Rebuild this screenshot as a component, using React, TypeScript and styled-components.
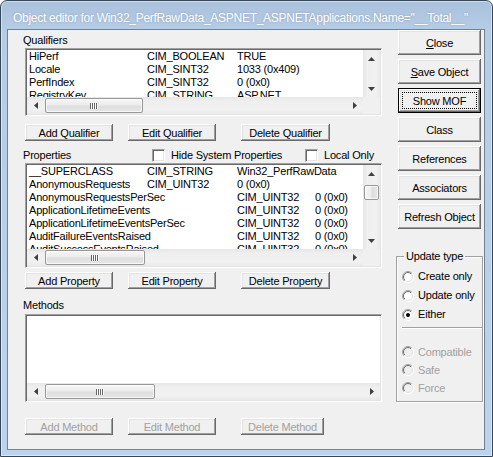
import React from "react";
import styled, { createGlobalStyle } from "styled-components";

const GlobalStyle = createGlobalStyle`
  html, body { margin: 0; padding: 0; background: #ffffff; }
  #root { width: 493px; height: 457px; }
  * { box-sizing: border-box; }
`;

const Window = styled.div`
  width: 493px;
  height: 457px;
  border: 1px solid #37475a;
  border-radius: 7px 7px 0 0;
  background: linear-gradient(to bottom, #a9c1dc 0px, #b6cce5 28px, #bcd3ed 100%);
  box-shadow: inset 0 0 0 1px rgba(255, 255, 255, 0.45);
  display: flex;
  flex-direction: column;
  overflow: hidden;
`;

const TitleBar = styled.div`
  height: 28px;
  flex: none;
  display: flex;
  align-items: center;
  padding: 5px 0 0 12px;
  font-family: "Liberation Sans", Arial, sans-serif;
  font-size: 12px;
  letter-spacing: -0.28px;
  color: #ffffff;
  white-space: nowrap;
  text-shadow: 0 0 2px rgba(60, 80, 110, 0.35);
`;

const Client = styled.div`
  flex: 1;
  margin: 0 7px 6px 6px;
  border: 1px solid #6e8299;
  background: #f0f0f0;
  display: flex;
  font-family: "Liberation Sans", Arial, sans-serif;
  font-size: 11px;
  letter-spacing: -0.2px;
  color: #000000;
`;

const LeftPane = styled.div`
  width: 374px;
  flex: none;
  padding-left: 15px;
  display: flex;
  flex-direction: column;
`;

const SectionLabel = styled.div<{ $top: number }>`
  margin-top: ${(p) => p.$top}px;
  height: 13px;
  line-height: 13px;
`;

const ListBox = styled.div<{ $h: number; $top: number; $vscroll: boolean }>`
  margin: ${(p) => p.$top}px 0 0 2px;
  width: 357px;
  height: ${(p) => p.$h}px;
  flex: none;
  background: #ffffff;
  border: 1px solid;
  border-color: #a0a0a0 #ffffff #ffffff #a0a0a0;
  padding: 1px;
  box-shadow: inset 1px 1px #696969, inset -1px -1px #e3e3e3;
  display: grid;
  grid-template-columns: ${(p) => (p.$vscroll ? "1fr 17px" : "1fr")};
  grid-template-rows: 1fr 17px;
`;

const Rows = styled.div`
  overflow: hidden;
  min-width: 0;
  min-height: 0;
`;

const Row = styled.div`
  display: grid;
  grid-template-columns: 118px 90px 78px max-content;
  padding-left: 2px;
  height: 13px;
  line-height: 13px;
  white-space: nowrap;
`;

const Cell = styled.span<{ $span: number }>`
  grid-column: span ${(p) => p.$span};
`;

const HScroll = styled.div<{ $full: boolean }>`
  grid-column: ${(p) => (p.$full ? "1 / -1" : "1")};
  grid-row: 2;
  display: flex;
  background: linear-gradient(to bottom, #e6e6e6, #efefef 25%, #f1f1f1 75%, #e9e9e9);
`;

const VScroll = styled.div`
  grid-column: 2;
  grid-row: 1;
  display: flex;
  flex-direction: column;
  background: linear-gradient(to right, #e6e6e6, #efefef 25%, #f1f1f1 75%, #e9e9e9);
`;

const Corner = styled.div`
  grid-column: 2;
  grid-row: 2;
  background: #f0f0f0;
`;

const ScrollBtn = styled.div`
  width: 17px;
  height: 17px;
  flex: none;
  display: flex;
  align-items: center;
  justify-content: center;
`;

const Track = styled.div`
  flex: 1;
  display: flex;
  flex-direction: inherit;
`;

const HThumb = styled.div<{ $w: number }>`
  width: ${(p) => p.$w}px;
  margin: 1px 0 1px 1px;
  border: 1px solid #979797;
  border-radius: 2px;
  background: linear-gradient(to bottom, #f6f6f6, #ececec 45%, #dedede 55%, #e6e6e6);
  box-shadow: inset 0 0 0 1px rgba(255, 255, 255, 0.7);
  display: flex;
  align-items: center;
  justify-content: center;
`;

const VThumb = styled.div<{ $top: number; $h: number }>`
  height: ${(p) => p.$h}px;
  margin: ${(p) => p.$top}px 1px 0 1px;
  border: 1px solid #979797;
  border-radius: 2px;
  background: linear-gradient(to right, #f6f6f6, #ececec 45%, #dedede 55%, #e6e6e6);
  box-shadow: inset 0 0 0 1px rgba(255, 255, 255, 0.7);
`;

const ButtonRow = styled.div<{ $top: number }>`
  margin-top: ${(p) => p.$top}px;
  padding-left: 2px;
  display: grid;
  grid-template-columns: 103px 113px max-content;
  height: 17px;
`;

const PushButton = styled.button<{ $w: number }>`
  width: ${(p) => p.$w}px;
  height: 100%;
  margin: 0;
  padding: 0;
  border: 0;
  font: inherit;
  letter-spacing: inherit;
  color: #000000;
  background: #f0f0f0;
  box-shadow: inset -1px -1px #696969, inset 1px 1px #ffffff, inset -2px -2px #a0a0a0,
    inset 2px 2px #e3e3e3;
  &:disabled {
    color: #a0a0a0;
  }
`;

const RightPane = styled.div`
  margin-left: 14px;
  width: 88px;
  flex: none;
  display: flex;
  flex-direction: column;
`;

const SideButtons = styled.div`
  display: flex;
  flex-direction: column;
  gap: 4px;
  padding-left: 2px;
`;

const SideButton = styled.button<{ $default?: boolean }>`
  position: relative;
  width: 83px;
  height: 25px;
  margin: 0;
  padding: 0;
  border: ${(p) => (p.$default ? "1px solid #000000" : "0")};
  font: inherit;
  letter-spacing: inherit;
  color: #000000;
  background: #f0f0f0;
  box-shadow: inset -1px -1px #696969, inset 1px 1px #ffffff, inset -2px -2px #a0a0a0,
    inset 2px 2px #e3e3e3;
  u {
    text-decoration: underline;
  }
  &::after {
    content: "";
    display: ${(p) => (p.$default ? "block" : "none")};
    position: absolute;
    inset: 3px 3px 3px 3px;
    border: 1px dotted #000000;
  }
`;

const HeaderRow = styled.div`
  margin-top: 6px;
  height: 16px;
  display: grid;
  grid-template-columns: 129px 153px max-content;
  align-items: center;
`;

const CheckItem = styled.label`
  display: flex;
  align-items: center;
  gap: 6px;
  line-height: 13px;
`;

const CheckBox = styled.span`
  width: 13px;
  height: 13px;
  flex: none;
  background: #ffffff;
  border: 1px solid;
  border-color: #a0a0a0 #ffffff #ffffff #a0a0a0;
  box-shadow: inset 1px 1px #696969, inset -1px -1px #e3e3e3;
`;

const Group = styled.div`
  position: relative;
  margin-top: 27px;
  width: 87px;
  height: 146px;
  border: 1px solid #a0a0a0;
  box-shadow: inset 1px 1px #ffffff, 1px 1px #ffffff;
  padding: 10px 0 0 5px;
  display: flex;
  flex-direction: column;
`;

const Legend = styled.div`
  position: absolute;
  top: -7px;
  left: 7px;
  padding: 0 2px;
  line-height: 13px;
  background: #f0f0f0;
`;

const RadioRow = styled.div<{ $h: number; $disabled?: boolean }>`
  height: ${(p) => p.$h}px;
  display: flex;
  align-items: center;
  gap: 4px;
  line-height: 13px;
  color: ${(p) => (p.$disabled ? "#a0a0a0" : "#000000")};
`;

const Separator = styled.div<{ $bottom: number }>`
  margin: 3px 0 ${(p) => p.$bottom}px 0;
  width: 80px;
  height: 2px;
  border-top: 1px solid #a0a0a0;
  border-bottom: 1px solid #ffffff;
`;

type Dir = "up" | "down" | "left" | "right";

const Arrow = ({ dir }: { dir: Dir }) => {
  const vertical = dir === "up" || dir === "down";
  const w = vertical ? 7 : 4;
  const h = vertical ? 4 : 7;
  const d =
    dir === "up"
      ? "M0 4 L3.5 0 L7 4 Z"
      : dir === "down"
      ? "M0 0 L7 0 L3.5 4 Z"
      : dir === "left"
      ? "M4 0 L4 7 L0 3.5 Z"
      : "M0 0 L4 3.5 L0 7 Z";
  return (
    <svg width={w} height={h} viewBox={`0 0 ${w} ${h}`}>
      <path d={d} fill="#3f3f3f" />
    </svg>
  );
};

const Grip = () => (
  <svg width="8" height="6" viewBox="0 0 8 6">
    {[0, 2, 4, 6].map((x) => (
      <g key={x}>
        <rect x={x} y={0} width={1} height={6} fill="#666666" />
        <rect x={x + 1} y={0} width={1} height={6} fill="#ffffff" />
      </g>
    ))}
  </svg>
);

const RadioGlyph = ({ checked, disabled }: { checked?: boolean; disabled?: boolean }) => (
  <svg width="12" height="12" viewBox="0 0 12 12" style={{ flex: "none" }}>
    <defs>
      <linearGradient id="rgOuter" x1="0" y1="0" x2="1" y2="1">
        <stop offset="0.5" stopColor="#a0a0a0" />
        <stop offset="0.5" stopColor="#ffffff" />
      </linearGradient>
      <linearGradient id="rgInner" x1="0" y1="0" x2="1" y2="1">
        <stop offset="0.5" stopColor="#696969" />
        <stop offset="0.5" stopColor="#e3e3e3" />
      </linearGradient>
    </defs>
    <circle cx="6" cy="6" r="5.5" fill="none" stroke="url(#rgOuter)" strokeWidth="1" />
    <circle
      cx="6"
      cy="6"
      r="4.5"
      fill={disabled ? "#f0f0f0" : "#ffffff"}
      stroke="url(#rgInner)"
      strokeWidth="1"
    />
    {checked && <circle cx="6" cy="6" r="2" fill="#000000" />}
  </svg>
);

type Entry = { cells: string[]; span: number };

const qualifiers: Entry[] = [
  { cells: ["HiPerf", "CIM_BOOLEAN", "TRUE"], span: 1 },
  { cells: ["Locale", "CIM_SINT32", "1033 (0x409)"], span: 1 },
  { cells: ["PerfIndex", "CIM_SINT32", "0 (0x0)"], span: 1 },
  { cells: ["RegistryKey", "CIM_STRING", "ASP.NET"], span: 1 },
];

const properties: Entry[] = [
  { cells: ["__SUPERCLASS", "CIM_STRING", "Win32_PerfRawData"], span: 1 },
  { cells: ["AnonymousRequests", "CIM_UINT32", "0 (0x0)"], span: 1 },
  { cells: ["AnonymousRequestsPerSec", "CIM_UINT32", "0 (0x0)"], span: 2 },
  { cells: ["ApplicationLifetimeEvents", "CIM_UINT32", "0 (0x0)"], span: 2 },
  { cells: ["ApplicationLifetimeEventsPerSec", "CIM_UINT32", "0 (0x0)"], span: 2 },
  { cells: ["AuditFailureEventsRaised", "CIM_UINT32", "0 (0x0)"], span: 2 },
  { cells: ["AuditSuccessEventsRaised", "CIM_UINT32", "0 (0x0)"], span: 2 },
  { cells: ["CompilationsTotal", "CIM_UINT32", "0 (0x0)"], span: 1 },
];

const EntryRows = ({ entries }: { entries: Entry[] }) => (
  <Rows>
    {entries.map((e) => (
      <Row key={e.cells[0]}>
        <Cell $span={e.span}>{e.cells[0]}</Cell>
        <Cell $span={1}>{e.cells[1]}</Cell>
        <Cell $span={1}>{e.cells[2]}</Cell>
      </Row>
    ))}
  </Rows>
);

const HBar = ({ thumb, full }: { thumb: number; full: boolean }) => (
  <HScroll $full={full}>
    <ScrollBtn>
      <Arrow dir="left" />
    </ScrollBtn>
    <Track>
      <HThumb $w={thumb}>
        <Grip />
      </HThumb>
    </Track>
    <ScrollBtn>
      <Arrow dir="right" />
    </ScrollBtn>
  </HScroll>
);

const VBar = ({ thumb }: { thumb?: { top: number; h: number } }) => (
  <VScroll>
    <ScrollBtn>
      <Arrow dir="up" />
    </ScrollBtn>
    <Track>{thumb && <VThumb $top={thumb.top} $h={thumb.h} />}</Track>
    <ScrollBtn>
      <Arrow dir="down" />
    </ScrollBtn>
  </VScroll>
);

export default function App() {
  return (
    <>
      <GlobalStyle />
      <Window>
        <TitleBar>Object editor for Win32_PerfRawData_ASPNET_ASPNETApplications.Name="__Total__"</TitleBar>
        <Client>
          <LeftPane>
            <SectionLabel $top={4}>Qualifiers</SectionLabel>
            <ListBox $top={1} $h={68} $vscroll>
              <EntryRows entries={qualifiers} />
              <VBar />
              <HBar thumb={98} full={false} />
              <Corner />
            </ListBox>
            <ButtonRow $top={8}>
              <PushButton $w={88}>Add Qualifier</PushButton>
              <PushButton $w={88}>Edit Qualifier</PushButton>
              <PushButton $w={89}>Delete Qualifier</PushButton>
            </ButtonRow>
            <HeaderRow>
              <span>Properties</span>
              <CheckItem>
                <CheckBox />
                Hide System Properties
              </CheckItem>
              <CheckItem>
                <CheckBox />
                Local Only
              </CheckItem>
            </HeaderRow>
            <ListBox $top={0} $h={105} $vscroll>
              <EntryRows entries={properties} />
              <VBar thumb={{ top: 3, h: 15 }} />
              <HBar thumb={100} full={false} />
              <Corner />
            </ListBox>
            <ButtonRow $top={4}>
              <PushButton $w={88}>Add Property</PushButton>
              <PushButton $w={88}>Edit Property</PushButton>
              <PushButton $w={89}>Delete Property</PushButton>
            </ButtonRow>
            <SectionLabel $top={10}>Methods</SectionLabel>
            <ListBox $top={2} $h={88} $vscroll={false}>
              <Rows />
              <HBar thumb={110} full />
            </ListBox>
            <ButtonRow $top={16}>
              <PushButton $w={88} disabled>
                Add Method
              </PushButton>
              <PushButton $w={88} disabled>
                Edit Method
              </PushButton>
              <PushButton $w={83} disabled>
                Delete Method
              </PushButton>
            </ButtonRow>
          </LeftPane>
          <RightPane>
            <SideButtons>
              <SideButton>
                <u>C</u>lose
              </SideButton>
              <SideButton>
                <u>S</u>ave Object
              </SideButton>
              <SideButton $default>Show MOF</SideButton>
              <SideButton>Class</SideButton>
              <SideButton>References</SideButton>
              <SideButton>Associators</SideButton>
              <SideButton>Refresh Object</SideButton>
            </SideButtons>
            <Group>
              <Legend>Update type</Legend>
              <RadioRow $h={19}>
                <RadioGlyph />
                Create only
              </RadioRow>
              <RadioRow $h={19}>
                <RadioGlyph />
                Update only
              </RadioRow>
              <RadioRow $h={19}>
                <RadioGlyph checked />
                Either
              </RadioRow>
              <Separator $bottom={14} />
              <RadioRow $h={18} $disabled>
                <RadioGlyph disabled />
                Compatible
              </RadioRow>
              <RadioRow $h={18} $disabled>
                <RadioGlyph disabled />
                Safe
              </RadioRow>
              <RadioRow $h={18} $disabled>
                <RadioGlyph disabled />
                Force
              </RadioRow>
            </Group>
          </RightPane>
        </Client>
      </Window>
    </>
  );
}
